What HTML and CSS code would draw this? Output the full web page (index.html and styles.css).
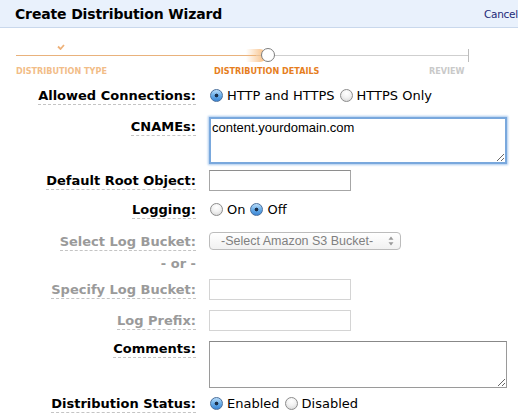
FILE: index.html
```html
<!DOCTYPE html>
<html>
<head>
<meta charset="utf-8">
<title>Create Distribution Wizard</title>
<link rel="stylesheet" href="styles.css">
</head>
<body>
<div class="header">
  <h1 class="title">Create Distribution Wizard</h1>
  <a class="cancel" href="#">Cancel</a>
</div>

<div class="stepper">
  <div class="track">
    <div class="seg-done"></div>
    <div class="seg-todo"></div>
    <svg class="check" width="8" height="6" viewBox="0 0 8 6"><path d="M1 2.5 L3.5 5 L7 1" fill="none" stroke="#eeb27a" stroke-width="1.8"/></svg>
    <div class="glow"></div>
    <div class="current"></div>
  </div>
  <div class="step-labels">
    <span class="step done">DISTRIBUTION TYPE</span>
    <span class="step active">DISTRIBUTION DETAILS</span>
    <span class="step todo">REVIEW</span>
  </div>
</div>

<div class="form">
  <div class="row r-conn">
    <div class="lbl"><span>Allowed Connections:</span></div>
    <div class="ctl">
      <label class="opt"><input type="radio" name="conn" checked> HTTP and HTTPS</label>
      <label class="opt"><input type="radio" name="conn"> HTTPS Only</label>
    </div>
  </div>
  <div class="row r-cname top">
    <div class="lbl"><span>CNAMEs:</span></div>
    <div class="ctl"><textarea class="ta focus">content.yourdomain.com</textarea></div>
  </div>
  <div class="row r-root">
    <div class="lbl"><span>Default Root Object:</span></div>
    <div class="ctl"><input class="txt" type="text"></div>
  </div>
  <div class="row r-log">
    <div class="lbl"><span>Logging:</span></div>
    <div class="ctl">
      <label class="opt"><input type="radio" name="log"> On</label>
      <label class="opt"><input type="radio" name="log" checked> Off</label>
    </div>
  </div>
  <div class="row r-sel dis">
    <div class="lbl"><span>Select Log Bucket:</span></div>
    <div class="ctl">
      <div class="select">
        <span class="sel-text">-Select Amazon S3 Bucket-</span>
        <svg class="sel-arrows" width="6" height="10" viewBox="0 0 6 10"><path d="M3 0.5 L5.5 3.8 H0.5 Z M3 9.5 L5.5 6.2 H0.5 Z" fill="#9a9a9a"/></svg>
      </div>
    </div>
  </div>
  <div class="row r-or dis">
    <div class="lbl or">- or -</div>
  </div>
  <div class="row r-spec dis">
    <div class="lbl"><span>Specify Log Bucket:</span></div>
    <div class="ctl"><input class="txt disabled" type="text" disabled></div>
  </div>
  <div class="row r-prefix dis">
    <div class="lbl"><span>Log Prefix:</span></div>
    <div class="ctl"><input class="txt disabled" type="text" disabled></div>
  </div>
  <div class="row r-comm top">
    <div class="lbl"><span>Comments:</span></div>
    <div class="ctl"><textarea class="ta plain"></textarea></div>
  </div>
  <div class="row r-stat">
    <div class="lbl"><span>Distribution Status:</span></div>
    <div class="ctl">
      <label class="opt"><input type="radio" name="stat" checked> Enabled</label>
      <label class="opt"><input type="radio" name="stat"> Disabled</label>
    </div>
  </div>
</div>
</body>
</html>
```

FILE: styles.css
```css
html, body {
  margin: 0;
  padding: 0;
  overflow: hidden;
  background: #fff;
}
body {
  font-family: "DejaVu Sans", Verdana, sans-serif;
  color: #000;
  width: 518px;
  height: 415px;
}

.header {
  height: 27px;
  background: #e9f1fc;
  border-bottom: 1px solid #c9d8ec;
  display: flex;
  align-items: center;
  padding-left: 15px;
  white-space: nowrap;
}
.title {
  margin: 0;
  width: 469px;
  flex: none;
  font-size: 14px;
  font-weight: bold;
  letter-spacing: -0.15px;
  color: #000;
}
.cancel {
  flex: none;
  font-size: 10.5px;
  letter-spacing: -0.3px;
  color: #1e2a78;
  text-decoration: none;
}

.stepper {
  margin-top: 21px;
}
.track {
  position: relative;
  margin-left: 16px;
  width: 452px;
  height: 13px;
  display: flex;
  align-items: center;
  border-right: 1px solid #bdbdbd;
}
.seg-done {
  flex: 0 0 240px;
  height: 1px;
  background: #e9b27c;
}
.seg-todo {
  flex: 1;
  height: 1px;
  background: #cfcfcf;
}
.check {
  position: absolute;
  left: 41px;
  top: -5px;
}
.glow {
  position: absolute;
  left: 230px;
  top: 0;
  width: 20px;
  height: 13px;
  border-radius: 0 6px 6px 0;
  background: linear-gradient(to right, rgba(247,190,130,0), rgba(247,180,110,0.9));
}
.current {
  position: absolute;
  left: 245px;
  top: -1px;
  width: 12px;
  height: 12px;
  border: 1.5px solid #7d7d7d;
  border-radius: 50%;
  background: #fff;
}
.step-labels {
  display: grid;
  grid-template-columns: 198px 215px auto;
  padding-left: 16px;
  margin-top: 3px;
  height: 13px;
}
.step {
  font-family: "DejaVu Sans Condensed", "DejaVu Sans", sans-serif;
  font-stretch: condensed;
  font-weight: bold;
  font-size: 9px;
  line-height: 13px;
  white-space: nowrap;
}
.step.done { color: #f2bd88; }
.step.active { color: #e67e1e; }
.step.todo { color: #c9c9c9; }

.form {
  display: flex;
  flex-direction: column;
}
.row {
  display: flex;
  align-items: center;
  column-gap: 13px;
}
.row.top { align-items: flex-start; }
.lbl {
  flex: 0 0 196px;
  text-align: right;
  font-size: 13px;
  font-weight: bold;
  line-height: 15px;
  white-space: nowrap;
}
.lbl span {
  border-bottom: 1px dashed #c4c4c4;
  padding-bottom: 1px;
}
.dis .lbl { color: #9a9a9a; }

.r-conn { margin-top: 7px; height: 20px; }
.r-cname { margin-top: 12px; }
.r-cname .lbl { padding-top: 2px; }
.r-root { margin-top: 6px; height: 21px; }
.r-log { margin-top: 8px; height: 20px; }
.r-sel { margin-top: 13px; height: 18px; }
.r-or { margin-top: 5px; height: 16px; }
.r-spec { margin-top: 8px; height: 21px; }
.r-prefix { margin-top: 10px; height: 21px; }
.r-comm { margin-top: 10px; }
.r-comm .lbl { padding-top: 0; }
.r-stat { margin-top: 5px; height: 20px; }

.ctl {
  display: flex;
  align-items: center;
}
.opt {
  display: inline-flex;
  align-items: center;
  font-size: 13px;
  margin-right: 4px;
  white-space: nowrap;
}
.opt input {
  appearance: none;
  -webkit-appearance: none;
  width: 13px;
  height: 13px;
  margin: 0 4px 0 1px;
  border-radius: 50%;
  border: 1px solid #8c8c8c;
  background: radial-gradient(circle at 50% 30%, #ffffff 0%, #f2f2f2 45%, #d2d2d2 100%);
  box-sizing: border-box;
  flex: none;
}
.opt input:checked {
  border-color: #4a6f9c;
  background:
    radial-gradient(circle at 50% 50%, #1b2f4a 0, #1b2f4a 1.6px, transparent 2.2px),
    linear-gradient(to bottom, #b9dcf9 0%, #6aaee9 50%, #3b86d6 100%);
}

.ta {
  display: block;
  box-sizing: border-box;
  font-family: "Liberation Sans", Arial, sans-serif;
  font-size: 13px;
  line-height: 15px;
  padding: 1px 1px;
  margin: 0;
  resize: both;
  outline: none;
}
.ta.focus {
  width: 298px;
  height: 47px;
  border: 2px solid #79a8dd;
  box-shadow: 0 0 2px 1px #a9c9ee;
  color: #000;
}
.ta.plain {
  width: 298px;
  height: 47px;
  border: 1px solid #9a9a9a;
  border-top-color: #888;
}

.txt {
  box-sizing: border-box;
  width: 142px;
  height: 21px;
  margin: 0;
  border: 1px solid #a6a6a6;
  border-top-color: #8e8e8e;
  background: #fff;
  font-family: "Liberation Sans", Arial, sans-serif;
  font-size: 13px;
}
.txt.disabled {
  border: 1px solid #d4d4d4;
  background: #fff;
}

.select {
  box-sizing: border-box;
  width: 192px;
  height: 18px;
  border: 1px solid #bcbcbc;
  border-radius: 4px;
  background: linear-gradient(to bottom, #ffffff, #f1f1f1);
  display: flex;
  align-items: center;
  padding-left: 11px;
  padding-right: 6px;
}
.sel-text {
  flex: 1;
  font-family: "Liberation Sans", Arial, sans-serif;
  font-size: 12.5px;
  color: #808080;
  white-space: nowrap;
}
.sel-arrows { flex: none; }
```
